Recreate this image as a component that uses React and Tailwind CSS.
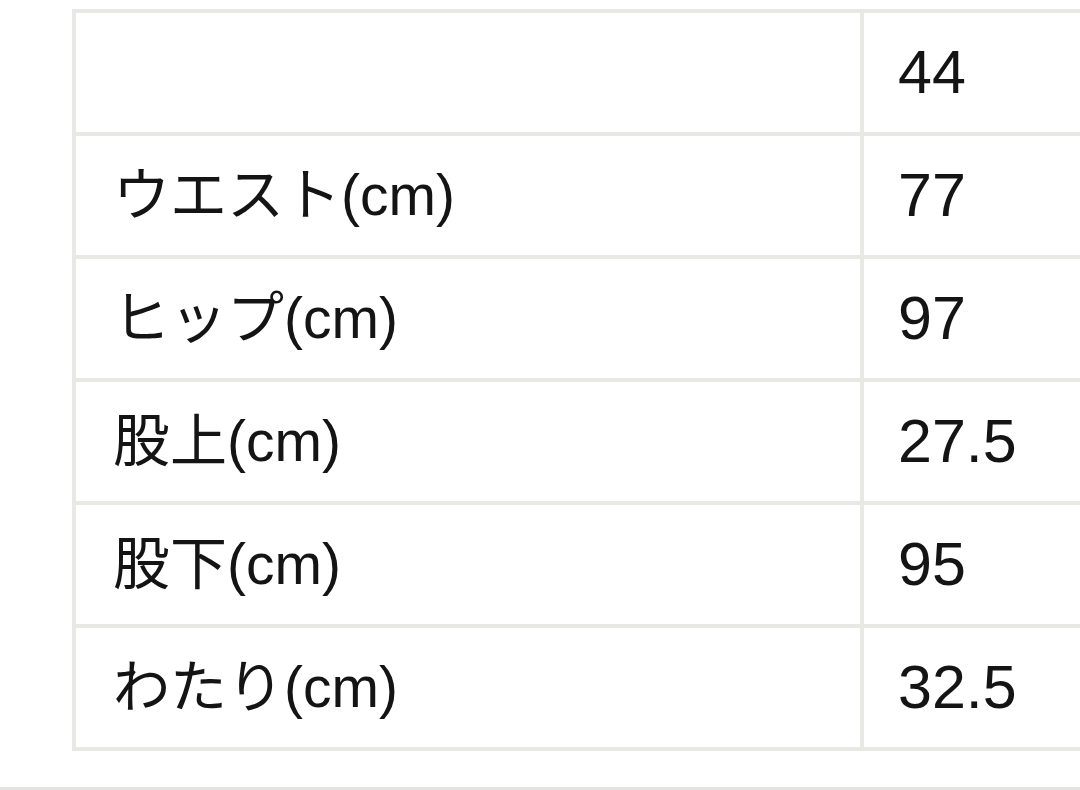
import React from "react";

const rows = [
  ["", "44"],
  ["ウエスト(cm)", "77"],
  ["ヒップ(cm)", "97"],
  ["股上(cm)", "27.5"],
  ["股下(cm)", "95"],
  ["わたり(cm)", "32.5"],
];

export default function App() {
  return (
    <div
      className="w-[1080px] h-[790px] overflow-hidden bg-white relative"
      style={{ fontFamily: '"Liberation Sans", "Noto Sans CJK JP", sans-serif' }}
    >
      <div className="pt-[9px] pl-[72px]">
        <div className="w-[1120px] border-t-4 border-l-4 border-[#e8e8e5]">
          {rows.map(([label, value], i) => (
            <div key={i} className="flex h-[123px] border-b-4 border-[#e8e8e5]">
              <div className="w-[788px] shrink-0 border-r-4 border-[#e8e8e5] flex items-center pl-[37px] text-[57px] text-[#141414] leading-none">
                {label}
              </div>
              <div className="flex-1 flex items-center pl-[34px] text-[61px] text-[#141414] leading-none">
                {value}
              </div>
            </div>
          ))}
        </div>
      </div>
      <div className="absolute left-0 right-0 top-[787px] h-[3px] bg-[#e3e3e1]" />
    </div>
  );
}
